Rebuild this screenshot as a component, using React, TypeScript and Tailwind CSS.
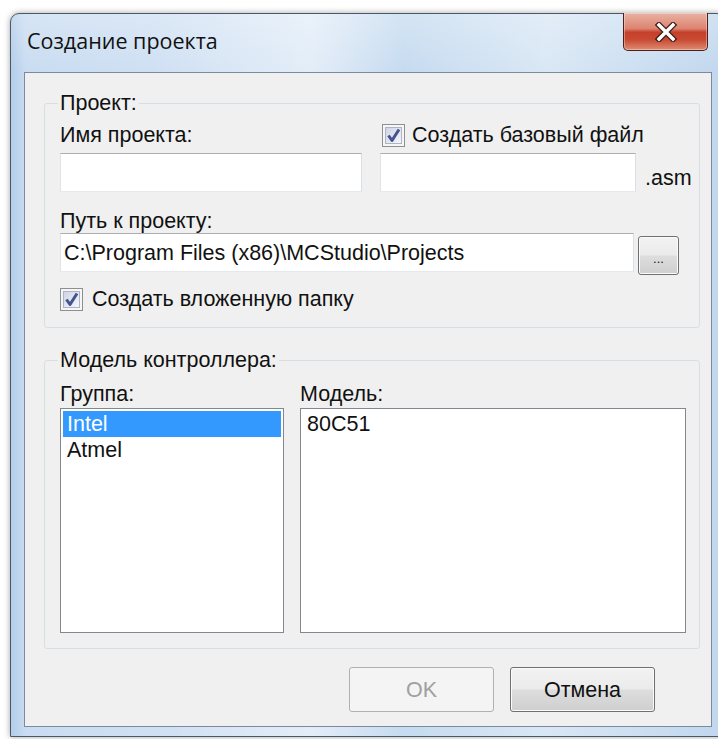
import { useId } from "react"

function CheckBox() {
  const id = useId()
  return (
    <svg width="23" height="23" viewBox="0 0 23 23" className="shrink-0">
      <defs>
        <linearGradient id={id} x1="0" y1="0" x2="1" y2="1">
          <stop offset="0" stopColor="#cfd3e6" />
          <stop offset="1" stopColor="#f6f7fc" />
        </linearGradient>
      </defs>
      <rect x="0.5" y="0.5" width="22" height="22" fill="#f6f6f6" stroke="#8e8f8f" />
      <rect x="3.5" y="3.5" width="16" height="16" fill={`url(#${id})`} stroke="#aeb3c6" />
      <path d="M6.5 11.5 L10 16.5 L17 5.5" fill="none" stroke="#42558f" strokeWidth="3" strokeLinejoin="round" />
    </svg>
  )
}

function TextBox({ className = "", children }: { className?: string; children?: React.ReactNode }) {
  return (
    <div
      className={`flex h-[39px] items-center border border-t-[#abadb3] border-l-[#e2e3ea] border-r-[#dbdfe6] border-b-[#e3e9ef] bg-white pl-[3px] ${className}`}
    >
      {children}
    </div>
  )
}

function PushButton({ disabled, children }: { disabled?: boolean; children: React.ReactNode }) {
  return (
    <div
      className={
        disabled
          ? "flex h-[45px] w-[145px] items-center justify-center rounded-[3px] border border-[#adb2b5] bg-[#f4f4f4] text-[#a0a0a0]"
          : "flex h-[45px] w-[145px] items-center justify-center rounded-[3px] border border-[#707070] bg-[linear-gradient(180deg,#f2f2f2_0%,#ebebeb_48%,#dddddd_52%,#cfcfcf_100%)] shadow-[inset_0_0_0_1px_#fbfbfb]"
      }
    >
      {children}
    </div>
  )
}

function GroupBox({ title, className = "", children }: { title: string; className?: string; children: React.ReactNode }) {
  return (
    <fieldset className={`rounded-[3px] border border-[#d5dfe5] pl-[15px] ${className}`}>
      <legend className="-ml-[2px] px-[2px] leading-[24px]">{title}</legend>
      {children}
    </fieldset>
  )
}

function CloseGlyph() {
  return (
    <svg width="24" height="20" viewBox="0 0 24 20">
      <path d="M5 3 L19 17 M19 3 L5 17" stroke="#3b1d18" strokeWidth="6" strokeLinecap="square" />
      <path d="M5 3 L19 17 M19 3 L5 17" stroke="#ffffff" strokeWidth="3.4" strokeLinecap="square" />
    </svg>
  )
}

export default function App() {
  return (
    <div className="h-[739px] w-[718px] overflow-hidden bg-white pt-[13px] pl-[10px]">
      <div className="w-[716px] rounded-t-[9px] border border-[#4a5868] bg-[linear-gradient(180deg,rgba(255,255,255,0.25)_0%,rgba(255,255,255,0)_8%),linear-gradient(90deg,#b3cde9_0%,#c9dcf1_2%,#cfe0f3_20%,#e3edf8_42%,#c6dbf0_55%,#d9e7f5_75%,#c1d7ee_100%)] px-[13px] pb-[9px] shadow-[0_0_6px_rgba(0,0,0,0.35)]">
        {/* caption */}
        <div className="flex h-[58px] items-start justify-between">
          <div className="pt-[12px] pl-[3px] font-['Open_Sans',sans-serif] text-[21.5px] leading-[30px] text-[#111]">
            Создание проекта
          </div>
          <div className="-mt-px mr-[4px] flex h-[38px] w-[85px] items-center justify-center rounded-b-[5px] border border-t-0 border-[#4e1f17] bg-[linear-gradient(180deg,#eab1a3_0%,#dc8470_42%,#c5402b_52%,#c84a33_72%,#e08c72_100%)] shadow-[inset_0_0_0_1px_rgba(255,255,255,0.35)]">
            <CloseGlyph />
          </div>
        </div>

        {/* client area */}
        <div className="border border-[#7b8b9d] bg-[#f0f0f0] pt-[18px] pr-[11px] pb-[14px] pl-[19px] font-['Liberation_Sans',Arial,sans-serif] text-[21.5px] leading-[24px] text-[#111]">
          <GroupBox title="Проект:" className="pt-[6px] pb-[16px]">
            <div className="flex h-[28px] items-center">
              <div className="w-[302px]">Имя проекта:</div>
              <div className="ml-[20px] flex items-center gap-[7px]">
                <CheckBox />
                <span>Создать базовый файл</span>
              </div>
            </div>
            <div className="mt-[4px] flex items-end">
              <TextBox className="w-[302px]" />
              <TextBox className="ml-[18px] w-[256px]" />
              <span className="ml-[9px] pb-[2px]">.asm</span>
            </div>
            <div className="mt-[17px]">Путь к проекту:</div>
            <div className="flex items-start">
              <TextBox className="w-[574px]">C:\Program Files (x86)\MCStudio\Projects</TextBox>
              <div className="mt-[3px] ml-[4px] flex h-[39px] w-[41px] items-end justify-center rounded-[3px] border border-[#707070] bg-[linear-gradient(180deg,#f2f2f2_0%,#ebebeb_48%,#dddddd_52%,#cfcfcf_100%)] pb-[9px] text-[13px] leading-[13px] shadow-[inset_0_0_0_1px_#fbfbfb]">
                ...
              </div>
            </div>
            <div className="mt-[12px] flex h-[24px] items-center gap-[9px]">
              <CheckBox />
              <span>Создать вложенную папку</span>
            </div>
          </GroupBox>

          <GroupBox title="Модель контроллера:" className="mt-[20px] pt-[10px] pb-[15px]">
            <div className="grid grid-cols-[224px_386px] gap-x-[16px]">
              <div>Группа:</div>
              <div>Модель:</div>
              <div className="mt-[2px] h-[225px] border border-[#828790] bg-white p-[2px]">
                <div className="h-[26px] bg-[#3399ff] pl-[4px] leading-[26px] text-white">Intel</div>
                <div className="h-[26px] pl-[4px] leading-[26px]">Atmel</div>
              </div>
              <div className="mt-[2px] h-[225px] border border-[#828790] bg-white p-[2px]">
                <div className="h-[26px] pl-[4px] leading-[26px]">80C51</div>
              </div>
            </div>
          </GroupBox>

          <div className="mt-[18px] flex justify-end gap-[16px] pr-[45px]">
            <PushButton disabled>OK</PushButton>
            <PushButton>Отмена</PushButton>
          </div>
        </div>
      </div>
    </div>
  )
}
